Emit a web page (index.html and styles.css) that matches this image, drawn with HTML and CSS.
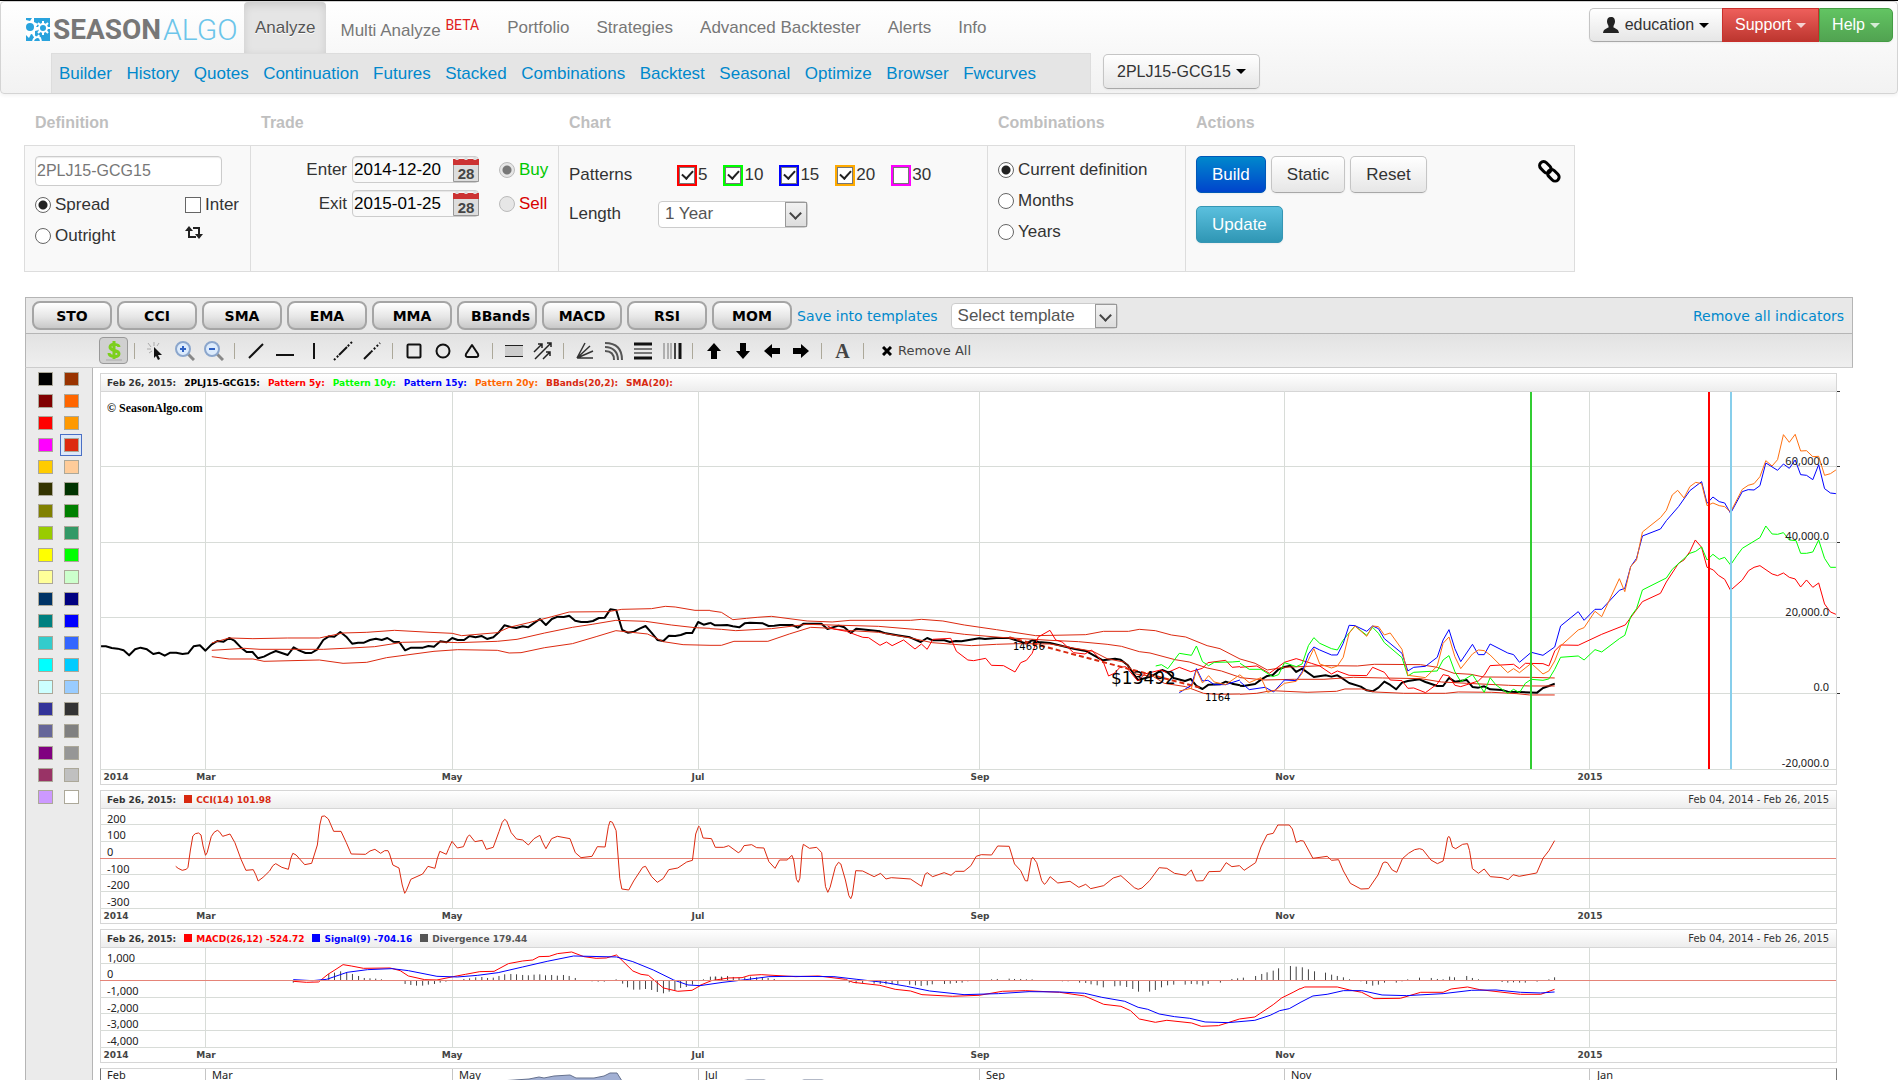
FILE: index.html
```html
<!DOCTYPE html>
<html lang="en">
<head>
<meta charset="utf-8">
<title>SeasonAlgo - Analyze</title>
<link rel="stylesheet" href="styles.css">
</head>
<body>
<header class="navbar">
  <div class="nav-main">
    <a class="brand" href="#">
      <svg class="brand-mark" width="24" height="23" viewBox="0 0 24 23"><path fill="#29a3dd" d="M0 0h24v23H0z"/><path fill="#fff" d="M0 2l4 1 2-3h2l0 4 4 2-2 3 3 3-4 1 0 4-4-1-2 4-3-3z"/><circle cx="4" cy="9" r="4" fill="#29a3dd"/><g fill="none" stroke="#fff"><circle cx="17" cy="10" r="4" stroke-width="2"/><path stroke-width="2" d="M17 3v3M17 14v3M10 10h3M21 10h3M12 5l2 2M20 13l2 2M22 5l-2 2M14 13l-2 2"/><path stroke-width="2" d="M7 23c1-4 5-5 7-3l1 3M7 16l2 3M13 17l-1 2"/></g></svg>
      <span class="brand-a">SEASON</span><span class="brand-b">ALGO</span>
    </a>
    <nav class="menu">
      <a class="active" href="#">Analyze</a>
      <a href="#">Multi Analyze <sup>BETA</sup></a>
      <a href="#">Portfolio</a>
      <a href="#">Strategies</a>
      <a href="#">Advanced Backtester</a>
      <a href="#">Alerts</a>
      <a href="#">Info</a>
    </nav>
    <div class="user-buttons">
      <button class="btn first" type="button"><svg width="16" height="16" viewBox="0 0 16 16"><path fill="#222" d="M8 0c3 0 4 2 4 4.500 0 2-1 3-1.500 4.500v1.500c2 1 5 1.500 5.500 5.500H0c.500-4 3.500-4.500 5.500-5.500V9C5 7.500 4 6.500 4 4.500 4 2 5 0 8 0z"/></svg>education<i class="caret"></i></button>
      <button class="btn danger" type="button">Support<i class="caret"></i></button>
      <button class="btn success" type="button">Help<i class="caret"></i></button>
    </div>
  </div>
  <div class="nav-sub">
    <nav class="submenu">
      <a href="#">Builder</a><a href="#">History</a><a href="#">Quotes</a><a href="#">Continuation</a><a href="#">Futures</a><a href="#">Stacked</a><a href="#">Combinations</a><a href="#">Backtest</a><a href="#">Seasonal</a><a href="#">Optimize</a><a href="#">Browser</a><a href="#">Fwcurves</a>
    </nav>
    <button class="btn symbol" type="button">2PLJ15-GCG15<i class="caret"></i></button>
  </div>
</header>

<form class="builder">
  <section>
    <h2>Definition</h2>
    <div class="cell definition">
      <input class="field symbol-field" type="text" value="2PLJ15-GCG15" aria-label="Symbol">
      <label><input type="radio" name="kind" checked>Spread</label>
      <label><input type="checkbox">Inter</label>
      <label><input type="radio" name="kind">Outright</label>
      <svg class="swap" width="18" height="13" viewBox="0 0 18 13"><path fill="none" stroke="#222" stroke-width="2" d="M4 3v8h7M8 2h6v7"/><path fill="#222" d="M0 5l4-5 4 5zM10 8h8l-4 5z"/></svg>
    </div>
  </section>
  <section>
    <h2>Trade</h2>
    <div class="cell trade">
      <label for="enter">Enter</label>
      <span class="date"><input id="enter" class="field" type="text" value="2014-12-20"><svg width="26" height="25" viewBox="0 0 26 25"><path fill="#ddd" stroke="#999" d="M.5 4.500h25v20H.5z"/><path fill="#c33" d="M0 2h26v6H0z"/><path stroke="#ddd" stroke-width="3" stroke-dasharray="3 4" d="M4 0v5M13 0v5M22 0v5"/><text x="13" y="22" text-anchor="middle">28</text></svg></span>
      <label class="buy"><input type="radio" name="side" checked disabled>Buy</label>
      <label for="exit">Exit</label>
      <span class="date"><input id="exit" class="field" type="text" value="2015-01-25"><svg width="26" height="25" viewBox="0 0 26 25"><path fill="#ddd" stroke="#999" d="M.5 4.500h25v20H.5z"/><path fill="#c33" d="M0 2h26v6H0z"/><path stroke="#ddd" stroke-width="3" stroke-dasharray="3 4" d="M4 0v5M13 0v5M22 0v5"/><text x="13" y="22" text-anchor="middle">28</text></svg></span>
      <label class="sell"><input type="radio" name="side" disabled>Sell</label>
    </div>
  </section>
  <section>
    <h2>Chart</h2>
    <div class="cell chart-options">
      <span>Patterns</span>
      <div class="patterns">
        <label class="p5"><input type="checkbox" checked>5</label>
        <label class="p10"><input type="checkbox" checked>10</label>
        <label class="p15"><input type="checkbox" checked>15</label>
        <label class="p20"><input type="checkbox" checked>20</label>
        <label class="p30"><input type="checkbox">30</label>
      </div>
      <label for="length">Length</label>
      <span class="select length"><select id="length"><option>1 Year</option></select></span>
    </div>
  </section>
  <section>
    <h2>Combinations</h2>
    <div class="cell combos">
      <label><input type="radio" name="combo" checked>Current definition</label>
      <label><input type="radio" name="combo">Months</label>
      <label><input type="radio" name="combo">Years</label>
    </div>
  </section>
  <section>
    <h2>Actions</h2>
    <div class="cell actions">
      <div class="action-buttons">
        <button class="btn primary" type="button">Build</button>
        <button class="btn" type="button">Static</button>
        <button class="btn" type="button">Reset</button>
        <button class="btn info" type="button">Update</button>
      </div>
      <a href="#" aria-label="Link"><svg width="24" height="24" viewBox="0 0 24 24" fill="none" stroke="#000" stroke-width="3"><rect x="2" y="4" width="13" height="8" rx="4" transform="rotate(45 8 8)"/><rect x="10" y="12" width="13" height="8" rx="4" transform="rotate(45 16 16)"/></svg></a>
    </div>
  </section>
</form>

<main class="workspace">
  <div class="indicators">
    <button type="button">STO</button><button type="button">CCI</button><button type="button">SMA</button><button type="button">EMA</button><button type="button">MMA</button><button type="button">BBands</button><button type="button">MACD</button><button type="button">RSI</button><button type="button">MOM</button>
    <a href="#">Save into templates</a>
    <span class="select template"><select aria-label="Select template"><option>Select template</option></select></span>
    <a class="remove" href="#">Remove all indicators</a>
  </div>
  <div class="tools">
    <button class="on" type="button" aria-label="Show profit"><svg viewBox="0 0 20 20"><path fill="none" stroke="#7ccf1d" stroke-width="3" d="M15 6c0-3-9-4-9 0 0 5 9 2 9 7 0 4-10 3-10-1M10 0v18"/><path stroke="#aaa" d="M2 19h16"/></svg></button>
    <i class="sep"></i>
    <button type="button" aria-label="Cursor"><svg viewBox="0 0 20 20"><path stroke="#aaa" fill="none" d="M8 1v4M2 2l3 4M1 8h4M13 2l-2 3M3 12l3-2"/><path fill="#111" d="M8 6l8 8h-4l2 4-2 1-2-4-2 2z"/></svg></button>
    <button type="button" aria-label="Zoom in"><svg viewBox="0 0 20 20"><path stroke="#888" stroke-width="3" d="M13 13l6 6"/><circle cx="8" cy="8" r="7" fill="#dcebfc" stroke="#8ba6cc" stroke-width="2"/><path stroke="#2f62c4" stroke-width="2" d="M8 5v6M5 8h6"/></svg></button>
    <button type="button" aria-label="Zoom out"><svg viewBox="0 0 20 20"><path stroke="#888" stroke-width="3" d="M13 13l6 6"/><circle cx="8" cy="8" r="7" fill="#dcebfc" stroke="#8ba6cc" stroke-width="2"/><path stroke="#2f62c4" stroke-width="2" d="M5 8h6"/></svg></button>
    <i class="sep"></i>
    <button type="button" aria-label="Line"><svg viewBox="0 0 20 20"><path stroke="#111" stroke-width="2" d="M3 17L17 3"/></svg></button>
    <button type="button" aria-label="Horizontal line"><svg viewBox="0 0 20 20"><path stroke="#111" stroke-width="2" d="M1 14h18"/></svg></button>
    <button type="button" aria-label="Vertical line"><svg viewBox="0 0 20 20"><path stroke="#111" stroke-width="2" d="M10 2v16"/></svg></button>
    <button type="button" aria-label="Infinite line"><svg viewBox="0 0 20 20"><path stroke="#111" stroke-width="2" d="M6 14l8-8"/><path stroke="#111" stroke-width="2" stroke-dasharray="2 2" d="M1 19l5-5M19 1l-5 5"/></svg></button>
    <button type="button" aria-label="Ray"><svg viewBox="0 0 20 20"><path stroke="#111" stroke-width="2" d="M2 18l7-7"/><path stroke="#111" stroke-width="2" stroke-dasharray="2 2" d="M9 11l9-9"/></svg></button>
    <i class="sep"></i>
    <button type="button" aria-label="Rectangle"><svg viewBox="0 0 20 20"><rect x="3.500" y="3.500" width="13" height="13" rx="1" fill="none" stroke="#111" stroke-width="2"/></svg></button>
    <button type="button" aria-label="Ellipse"><svg viewBox="0 0 20 20"><circle cx="10" cy="10" r="6.500" fill="none" stroke="#111" stroke-width="2"/></svg></button>
    <button type="button" aria-label="Triangle"><svg viewBox="0 0 20 20"><path fill="none" stroke="#111" stroke-width="2" stroke-linejoin="round" d="M10 4l6 9q1 3-2 3H6q-3 0-2-3z"/></svg></button>
    <i class="sep"></i>
    <button type="button" aria-label="Channel"><svg viewBox="0 0 20 20"><path fill="#ccc" d="M1 5h18v10H1z"/><path stroke="#222" d="M1 4.500h18M1 15.500h18"/></svg></button>
    <button type="button" aria-label="Pitchfork"><svg viewBox="0 0 20 20"><path fill="none" stroke="#222" stroke-width="1.500" d="M1 11L9 3M5 3h4v4M2 18L18 2M14 2h4v4M10 18l7-7M13 11h4v4"/></svg></button>
    <i class="sep"></i>
    <button type="button" aria-label="Fibonacci fan"><svg viewBox="0 0 20 20"><path stroke="#333" stroke-width="1.500" d="M2 17L10 2M2 17L15 5M2 17l16-7M2 17h16"/></svg></button>
    <button type="button" aria-label="Fibonacci arcs"><svg viewBox="0 0 20 20"><path fill="none" stroke="#555" stroke-width="2" d="M1 2c11 0 17 6 17 17M1 6c8 0 13 5 13 13M1 10c6 0 9 3 9 9"/></svg></button>
    <button type="button" aria-label="Fibonacci retracement"><svg viewBox="0 0 20 20"><path stroke="#111" stroke-width="3" d="M1 3h18M1 17h18"/><path stroke="#777" stroke-width="2" d="M1 8h18M1 12h18"/></svg></button>
    <button type="button" aria-label="Fibonacci time zones"><svg viewBox="0 0 20 20"><path stroke="#777" d="M2 2v16M6 2v16M9 2v16"/><path stroke="#444" stroke-width="2" d="M13 2v16"/><path stroke="#111" stroke-width="3" d="M18 2v16"/></svg></button>
    <i class="sep"></i>
    <button type="button" aria-label="Up arrow"><svg viewBox="0 0 20 20"><path d="M10 2l7 8h-4v8H7v-8H3z"/></svg></button>
    <button type="button" aria-label="Down arrow"><svg viewBox="0 0 20 20"><path d="M10 18l7-8h-4V2H7v8H3z"/></svg></button>
    <button type="button" aria-label="Left arrow"><svg viewBox="0 0 20 20"><path d="M2 10l8-7v4h8v6h-8v4z"/></svg></button>
    <button type="button" aria-label="Right arrow"><svg viewBox="0 0 20 20"><path d="M18 10l-8-7v4H2v6h8v4z"/></svg></button>
    <i class="sep"></i>
    <button class="letter" type="button">A</button>
    <i class="sep"></i>
    <button class="clear" type="button"><svg viewBox="0 0 10 10"><path stroke="#000" stroke-width="3" d="M1 1l8 8M9 1l-8 8"/></svg>Remove All</button>
  </div>
  <div class="stage">
    <div class="palette" id="palette"></div>
    <div class="panels">
      <section class="panel">
        <h3><b>Feb 26, 2015:</b><b class="k">2PLJ15-GCG15:</b><b class="c5">Pattern 5y:</b><b class="c10">Pattern 10y:</b><b class="c15">Pattern 15y:</b><b class="c20">Pattern 20y:</b><b class="ind">BBands(20,2):</b><b class="ind last">SMA(20):</b></h3>
        <svg class="plot" viewBox="1 1 1735 392">
          <path class="grid" d="M0 75.500h1736M0 151.500h1736M0 226.500h1736M0 302.500h1736M0 378.500h1736M105.500 0v378M352.500 0v378M598.500 0v378M879.500 0v378M1184.500 0v378M1489.500 0v378"/>
          <path class="tick" d="M1737 .5h3M1737 75.500h3M1737 151.500h3M1737 226.500h3M1737 302.500h3"/>
          <text class="mark" x="7" y="21">© SeasonAlgo.com</text>
          <g transform="matrix(.3954 0 0 .3333 -10 189)">
            <polyline class="price" points="28,199 40,199 55,204 70,206 85,211 99,226 114,208 128,203 144,208 160,222 174,218 189,227 203,218 218,218 234,222 248,220 262,199 278,196 292,212 308,193 322,183 338,185 352,174 366,183 382,203 396,216 411,216 425,235 440,230 456,220 470,213 485,219 500,225 515,202 530,212 545,219 560,219 574,209 590,180 604,169 618,170 633,156 648,170 663,191 678,188 693,188 708,180 723,176 738,180 752,174 767,185 782,186 797,211 812,203 842,203 856,198 870,200 886,184 902,187 916,174 930,180 946,180 960,168 975,172 990,168 1004,177 1020,172 1034,157 1048,136 1064,141 1078,144 1094,139 1108,142 1122,130 1138,117 1153,135 1168,117 1183,110 1198,111 1212,107 1227,122 1242,126 1258,126 1272,123 1287,114 1302,113 1316,88 1331,91 1346,150 1360,158 1376,155 1390,146 1405,138 1420,158 1435,180 1450,183 1464,167 1480,168 1494,165 1508,159 1523,159 1538,126 1552,134 1568,129"/>
            <polyline class="band" points="308,189 352,174 412,176 500,174 580,174 640,159 700,157 770,151 860,157 916,160 940,167 1030,158 1060,142 1110,128 1168,110 1212,96 1310,95 1345,88 1420,86 1455,79 1480,81 1530,91 1568,91"/>
            <polyline class="band" points="308,211 390,205 430,208 590,208 660,204 720,200 790,187 870,185 930,188 1030,184 1080,178 1150,159 1220,142 1270,133 1330,121 1405,124 1470,135 1530,143 1568,145"/>
            <polyline class="band" points="308,230 352,237 412,237 440,244 580,240 640,250 700,247 750,233 870,214 930,209 1030,211 1060,219 1090,218 1150,203 1220,191 1280,170 1330,152 1410,162 1450,185 1500,194 1568,196"/>
          </g>
          <g transform="matrix(.35714 0 0 .3333 600 189)">
            <polyline class="price" points="28,128 42,136 58,136 76,135 92,139 110,142 125,130 140,128 176,130 192,138 208,137 224,135 258,135 274,143 290,131 340,131 357,147 388,137 404,142 422,159 438,146 504,154 520,160 552,166 588,172 618,186 636,174 652,181 684,181 700,186 716,183 732,184 782,175 798,177 830,174 866,174 912,190 930,181 948,186 980,189 1046,206 1080,213 1128,241 1162,236 1178,239 1198,256 1226,300 1245,295 1262,290 1294,270 1308,276 1326,294 1358,303 1374,297 1390,318 1407,327 1424,314 1456,313 1472,305 1490,311 1512,316"/>
            <polyline class="band" points="28,92 60,97 92,119 130,115 160,112 200,109 300,123 370,126 420,121 590,121 620,118 680,123 740,135 830,149 940,167 1080,164 1130,154 1200,154 1230,148 1275,152 1320,165 1360,171 1420,197 1456,206 1512,237"/>
            <polyline class="band" points="28,146 60,148 100,152 200,146 300,133 400,136 500,139 600,148 690,156 740,163 840,172 980,181 1060,185 1140,193 1180,199 1230,215 1260,219 1330,239 1370,246 1420,264 1460,273 1512,292"/>
            <polyline class="band" points="28,196 60,196 95,184 190,184 250,162 310,142 350,144 410,151 500,157 590,174 650,188 760,197 830,193 890,191 980,192 1040,203 1100,214 1140,236 1190,247 1220,282 1270,290 1300,310 1360,320 1410,340 1450,343 1512,342"/>
            <polyline class="s5" points="357,138 375,147 410,154 440,166 456,172 472,173 504,196 522,186 538,197 570,180 602,207 620,192 636,208 652,178 702,175 718,214 750,240 766,242 800,235 816,256 850,257 882,276 898,248 914,241 930,220 947,171 980,151 996,180 1014,186 1046,218 1078,222 1096,210 1130,248 1144,288 1160,280 1176,262 1192,260 1226,303 1245,282 1290,270 1308,278 1342,262 1374,275 1407,265 1422,248 1472,241 1490,262 1512,260"/>
            <polyline class="s10" points="1276,258 1292,254 1310,266 1342,220 1376,226 1390,198 1407,245 1424,257 1440,247 1490,246 1512,244"/>
            <polyline class="s15" points="1342,338 1376,316 1390,266 1407,303 1422,301 1440,314 1472,314 1512,300"/>
            <polyline class="s20" points="1342,333 1376,325 1390,270 1407,309 1424,287 1440,306 1472,314 1512,284"/>
            <path class="trend" d="M866 172L1407 325"/>
          </g>
          <g transform="matrix(.41964 0 0 .3333 1140 -11)">
            <polyline class="price" points="0,917 8,918 36,912 50,899 65,888 78,885 92,868 106,861 120,857 134,876 148,866 176,891 204,886 218,890 232,886 246,897 260,909 288,920 302,931 316,934 330,923 344,905 358,915 372,928 386,908 400,903 428,898 442,906 470,918 484,918 498,894 512,905 540,900 554,921 568,923 582,919 596,928 624,930 638,935 666,936 708,938 722,924 736,918 750,911"/>
            <polyline class="band" points="0,837 36,850 65,870 106,862 200,857 280,858 320,853 430,854 470,862 510,880 550,883 580,891 690,892 750,894"/>
            <polyline class="band" points="0,893 60,900 130,898 200,898 270,892 340,894 430,896 480,906 540,910 640,916 690,918 750,918"/>
            <polyline class="band" points="0,943 40,940 75,932 160,937 230,934 250,927 290,927 320,936 390,940 490,940 520,936 600,937 660,941 690,945 750,945"/>
            <polyline class="s5" points="0,862 40,858 70,880 106,847 134,836 170,850 190,858 218,882 232,873 260,886 302,887 316,862 344,877 358,900 386,902 400,925 414,924 442,938 470,912 484,884 498,888 512,916 526,920 568,903 582,886 596,857 652,853 666,866 680,850 722,851 736,858 750,813 764,795 806,796 862,763 918,735 959,665 1002,640 1016,606 1045,550 1058,540 1072,515 1085,480 1100,502 1113,562 1128,570 1140,586 1155,598 1169,631 1197,600 1212,572 1225,562 1239,557 1268,582 1281,587 1295,579 1309,592 1323,597 1336,621 1350,600 1365,622 1379,609 1393,672 1407,696 1420,703"/>
            <polyline class="s10" points="0,850 22,868 50,868 78,890 92,884 106,848 134,860 148,852 163,797 176,773 190,790 218,806 232,810 246,780 274,738 302,766 316,742 330,760 344,788 386,833 400,888 414,877 470,873 484,840 498,827 512,875 526,905 554,884 582,937 596,893 610,915 638,940 652,928 666,938 680,910 694,898 722,901 736,897 750,868 764,832 806,828 820,840 846,809 862,816 904,776 917,766 931,710 945,686 959,630 1016,594 1030,568 1058,536 1072,520 1086,514 1100,501 1113,540 1127,523 1142,538 1155,532 1169,555 1184,527 1197,505 1239,473 1253,438 1268,462 1281,463 1295,458 1309,480 1325,482 1336,520 1350,520 1365,516 1379,480 1393,535 1407,562 1420,562"/>
            <polyline class="s15" points="0,905 22,929 60,922 80,936 106,900 134,902 148,876 163,822 176,801 190,810 218,825 232,825 246,790 260,736 274,737 302,754 316,738 330,746 344,776 386,820 400,873 414,862 442,859 470,832 484,780 498,749 512,806 526,845 554,793 568,824 582,824 596,792 638,819 652,824 666,847 694,817 722,826 750,801 764,738 806,695 820,721 846,688 862,688 904,631 917,625 931,560 945,535 959,468 1002,447 1016,422 1045,380 1072,332 1100,305 1113,370 1127,351 1142,365 1155,369 1169,400 1197,335 1211,329 1225,330 1239,317 1253,249 1281,271 1295,252 1309,265 1323,240 1336,284 1350,286 1365,299 1379,254 1393,326 1407,339 1420,341"/>
            <polyline class="s20" points="0,885 22,908 50,893 66,937 85,930 106,910 134,904 148,880 163,840 176,806 190,852 218,864 232,858 246,832 260,760 274,738 302,769 316,738 330,740 344,765 358,759 386,808 400,886 442,893 470,858 484,790 498,771 512,830 526,866 554,822 568,810 582,812 596,825 638,878 652,866 666,878 694,850 722,882 736,873 750,843 764,798 806,750 820,743 846,694 862,710 904,596 917,635 931,560 945,540 959,456 1002,413 1016,391 1030,345 1043,331 1058,354 1072,320 1086,307 1100,311 1113,377 1127,369 1142,377 1155,380 1169,396 1197,328 1211,316 1225,311 1239,290 1253,242 1268,258 1281,239 1295,164 1309,187 1323,163 1336,213 1350,212 1365,230 1379,229 1393,286 1407,281 1420,270"/>
          </g>
          <path class="v-enter" d="M1431 1v377"/><path class="v-exit" d="M1609 1v377"/><path class="v-now" d="M1631 1v377"/>
          <text class="note" x="913" y="259">14656</text><text class="note big" x="1011" y="293">$13492</text><text class="note" x="1105" y="310">1164</text>
          <g class="axis end"><text x="1729" y="74">60,000.0</text><text x="1729" y="149">40,000.0</text><text x="1729" y="225">20,000.0</text><text x="1729" y="300">0.0</text><text x="1729" y="376">-20,000.0</text></g>
          <g class="months"><text x="16" y="389">2014</text><text x="106" y="389">Mar</text><text x="352" y="389">May</text><text x="598" y="389">Jul</text><text x="880" y="389">Sep</text><text x="1185" y="389">Nov</text><text x="1490" y="389">2015</text></g>
        </svg>
      </section>
      <section class="panel">
        <h3><b>Feb 26, 2015:</b><b class="ind"><i class="key"></i>CCI(14) 101.98</b><span>Feb 04, 2014 - Feb 26, 2015</span></h3>
        <svg class="plot" viewBox="1 1 1735 114">
          <path class="grid" d="M0 16.500h1736M0 33.500h1736M0 66.500h1736M0 83.500h1736M0 100.500h1736M105.500 0v100M352.500 0v100M598.500 0v100M879.500 0v100M1184.500 0v100M1489.500 0v100"/>
          <path class="zero" d="M0 50.500h1736"/>
          <g class="band" transform="matrix(.40816 0 0 .3333 -10 -28)"><polyline points="210,259 216,265 226,271 236,268 240,262 246,210 252,168 258,161 266,159 272,165 277,198 283,226 287,218 297,170 304,157 312,151 317,155 325,169 333,166 343,162 355,188 370,238 382,271 400,269 406,284 412,303 424,292 440,273 448,257 455,251 470,262 486,268 492,235 497,220 505,225 526,254 543,250 557,195 563,135 568,109 575,108 584,117 597,154 615,154 628,188 640,222 675,223 686,213 698,208 712,220 722,212 730,212 734,222 742,255 757,264 765,315 771,340 775,332 786,298 815,282 828,259 845,265 851,235 857,214 873,223 879,205 887,184 900,204 915,200 925,170 930,165 943,185 961,181 971,208 988,202 1002,155 1010,127 1016,118 1021,123 1032,158 1045,177 1060,180 1074,195 1088,176 1102,166 1109,187 1117,206 1131,176 1145,169 1176,176 1189,218 1203,233 1230,229 1243,200 1262,201 1270,140 1274,124 1280,127 1289,152 1298,295 1303,327 1320,330 1332,303 1354,262 1361,259 1376,290 1390,307 1404,296 1418,269 1440,264 1462,246 1476,241 1484,162 1491,139 1494,141"/></g>
          <g class="band" transform="matrix(.38265 0 0 .3333 600 -28)"><polyline points="0,143 8,174 30,176 40,202 62,202 75,197 100,218 106,214 115,197 135,194 148,203 167,204 180,245 196,265 208,240 228,240 240,226 245,240 252,298 257,307 261,295 267,210 270,193 286,205 305,202 318,218 328,320 334,337 340,322 354,260 362,247 368,252 380,300 389,347 394,356 398,345 407,272 425,273 455,290 472,280 486,297 500,293 550,297 579,319 588,283 594,278 608,290 638,278 656,286 668,274 690,274 708,257 722,229 735,224 762,225 778,198 808,199 822,252 838,272 850,302 856,303 866,236 870,232 880,248 893,302 900,313 905,308 915,290 935,309 967,304 990,322 1008,313 1021,326 1055,317 1080,294 1100,287 1135,323 1145,328 1155,324 1175,302 1200,263 1220,265 1240,280 1270,286 1284,270 1297,303 1315,302 1330,275 1360,274 1375,248 1390,260 1410,257 1422,271 1452,248 1466,201 1482,164 1498,160 1510,135 1540,135 1548,147 1558,187 1568,183"/></g>
          <g class="band" transform="matrix(.40689 0 0 .3333 1160 -28)"><polyline points="98,182 107,183 130,235 165,229 176,241 193,239 205,273 222,310 248,327 267,326 290,285 302,249 307,246 313,248 325,270 336,277 350,236 365,220 380,209 392,206 400,209 420,240 436,251 450,243 455,215 461,174 464,169 467,174 473,201 481,206 498,193 510,191 515,212 522,266 537,280 551,267 566,290 595,293 610,299 622,284 637,289 680,279 696,234 710,212 724,182"/></g>
          <g class="axis"><text x="7" y="15">200</text><text x="7" y="31">100</text><text x="7" y="48">0</text><text x="7" y="65">-100</text><text x="7" y="81">-200</text><text x="7" y="98">-300</text></g>
          <g class="months"><text x="16" y="111">2014</text><text x="106" y="111">Mar</text><text x="352" y="111">May</text><text x="598" y="111">Jul</text><text x="880" y="111">Sep</text><text x="1185" y="111">Nov</text><text x="1490" y="111">2015</text></g>
        </svg>
      </section>
      <section class="panel">
        <h3><b>Feb 26, 2015:</b><b class="c5"><i class="key"></i>MACD(26,12) -524.72</b><b class="c15"><i class="key"></i>Signal(9) -704.16</b><b class="div"><i class="key"></i>Divergence 179.44</b><span>Feb 04, 2014 - Feb 26, 2015</span></h3>
        <svg class="plot" viewBox="1 1 1735 114">
          <path class="grid" d="M0 16.500h1736M0 50.500h1736M0 66.500h1736M0 83.500h1736M0 100.500h1736M105.500 0v100M352.500 0v100M598.500 0v100M879.500 0v100M1184.500 0v100M1489.500 0v100"/>
          <g transform="matrix(.40816 0 0 .3333 -10 -167)">
            <path class="bars" d="M498 601V608M585 601V582M599 601V578M614 601V574M629 601V577M643 601V582M658 601V588M672 601V594M686 601V595M700 601V596M714 601V598M757 601V603M772 601V612M786 601V615M800 601V617M815 601V617M829 601V614M844 601V612M858 601V608M872 601V605M916 601V597M930 601V595M945 601V592M960 601V591M974 601V594M988 601V593M1002 601V588M1016 601V583M1031 601V582M1045 601V583M1060 601V585M1074 601V586M1088 601V584M1102 601V583M1116 601V586M1131 601V585M1145 601V587M1160 601V585M1174 601V588M1189 601V594M1230 601V604M1245 601V605M1260 601V605M1289 601V598M1305 601V611M1317 601V622M1332 601V629M1347 601V629M1361 601V627M1376 601V630M1390 601V636M1405 601V640M1419 601V635M1433 601V631M1447 601V624M1461 601V621M1476 601V614M1503 601V598M1520 601V590M1533 601V590M1548 601V592M1562 601V588"/>
            <polyline class="s5" points="498,604 530,607 560,606 583,583 600,570 620,554 640,558 670,565 735,564 760,572 780,588 820,599 850,600 890,590 920,583 955,575 990,574 1025,551 1060,543 1085,540 1100,530 1125,529 1145,521 1180,516 1210,530 1240,535 1265,534 1290,525 1330,573 1350,583 1368,586 1405,624 1440,634 1475,631 1495,617"/>
            <polyline class="s15" points="498,599 545,602 580,598 630,577 680,569 740,566 780,572 850,589 900,591 950,586 1000,578 1060,561 1120,544 1185,528 1290,531 1330,545 1380,570 1430,600 1465,615 1495,617"/>
          </g>
          <g transform="matrix(.38265 0 0 .3333 600 -167)">
            <path class="bars" d="M40 601V590M56 601V590M72 601V591M87 601V591M102 601V593M117 601V592M132 601V590M148 601V592M163 601V592M178 601V594M194 601V597M390 601V608M408 601V610M425 601V609M455 601V611M471 601V612M486 601V613M502 601V613M517 601V612M548 601V614M563 601V616M578 601V618M594 601V616M607 601V613M639 601V612M654 601V611M670 601V609M685 601V608M700 601V604M762 601V598M777 601V597M808 601V596M822 601V597M838 601V597M853 601V598M868 601V598M947 601V604M962 601V604M992 601V608M1008 601V609M1022 601V613M1038 601V616M1054 601V622M1084 601V619M1098 601V617M1115 601V621M1131 601V627M1146 601V635M1175 601V635M1190 601V630M1206 601V622M1222 601V616M1238 601V614M1268 601V614M1284 601V612M1299 601V613M1314 601V617M1328 601V612M1360 601V608M1390 601V597M1405 601V595M1420 601V593M1452 601V588M1468 601V582M1482 601V577M1498 601V572M1512 601V565M1543 601V558M1558 601V560"/>
            <polyline class="s5" points="0,616 30,602 75,594 110,593 130,586 160,584 250,590 310,588 380,598 400,607 470,616 510,628 550,633 580,644 660,649 730,646 790,634 850,632 940,637 1005,648 1055,673 1100,679 1125,692 1148,717 1190,727 1220,721 1285,729 1310,739 1355,737 1410,717 1450,711 1498,674 1520,654 1550,637 1568,626"/>
            <polyline class="s15" points="0,617 60,607 120,599 180,590 240,589 350,590 410,598 480,607 540,619 600,633 690,644 780,641 860,635 940,636 1005,640 1050,652 1110,664 1145,682 1170,688 1200,702 1240,710 1280,715 1320,726 1380,728 1450,721 1490,706 1515,692 1540,686 1568,668"/>
          </g>
          <g transform="matrix(.40689 0 0 .3333 1160 -167)">
            <path class="bars" d="M104 601V562M119 601V568M134 601V574M161 601V578M176 601V584M190 601V588M205 601V592M220 601V598M248 601V604M262 601V612M277 601V617M291 601V614M306 601V608M335 601V608M349 601V604M363 601V598M392 601V593M421 601V594M436 601V597M450 601V598M466 601V590M478 601V592M508 601V588M522 601V594M537 601V598M595 601V606M609 601V608M623 601V607M638 601V608M652 601V608M681 601V605M710 601V598M724 601V592"/>
            <polyline class="s5" points="98,627 110,621 190,621 220,630 250,637 280,656 345,655 395,637 450,637 470,627 510,621 540,629 590,636 640,643 690,643 724,628"/>
            <polyline class="s15" points="98,668 130,648 165,643 205,632 250,632 300,645 360,647 450,641 520,631 580,630 640,637 690,639 724,636"/>
          </g>
          <path class="zero" d="M0 33.500h1736"/>
          <g class="axis"><text x="7" y="15">1,000</text><text x="7" y="31">0</text><text x="7" y="48">-1,000</text><text x="7" y="65">-2,000</text><text x="7" y="81">-3,000</text><text x="7" y="98">-4,000</text></g>
          <g class="months"><text x="16" y="111">2014</text><text x="106" y="111">Mar</text><text x="352" y="111">May</text><text x="598" y="111">Jul</text><text x="880" y="111">Sep</text><text x="1185" y="111">Nov</text><text x="1490" y="111">2015</text></g>
        </svg>
      </section>
      <section class="panel navigator">
        <svg class="plot" viewBox="1 0 1735 11">
          <path class="grid nav-grid" d="M105.500 0v11M352.500 0v11M598.500 0v11M879.500 0v11M1184.500 0v11M1489.500 0v11"/>
          <path class="area" d="M400 12l29-2 10-2 5 1 10-2 16-1 6 3h18l10-2 6-3h7l5 8zM640 12l8-1h16l4 1zM700 12l4-1h18l4 1z"/>
          <g class="axis"><text x="7" y="10">Feb</text><text x="112" y="10">Mar</text><text x="359" y="10">May</text><text x="605" y="10">Jul</text><text x="886" y="10">Sep</text><text x="1191" y="10">Nov</text><text x="1497" y="10">Jan</text></g>
        </svg>
      </section>
    </div>
  </div>
</main>
<script src="palette.js"></script>
</body>
</html>
```
FILE: styles.css
```css
* { box-sizing: border-box; }
body { margin: 0; border-top: 1px solid #000; background: #fff; color: #333; font: 17px/20px "Liberation Sans", Arial, sans-serif; }
a { color: #08c; text-decoration: none; }
button, input, select { font: inherit; color: inherit; margin: 0; }
button { cursor: pointer; }
svg { flex: none; }

.navbar { height: 93px; border: 1px solid #d4d4d4; border-radius: 4px; background: linear-gradient(#fff, #f2f2f2); box-shadow: 0 1px 4px rgba(0, 0, 0, .07); }
.nav-main { display: flex; height: 51px; }
.brand { display: flex; align-items: center; width: 218px; margin-left: 25px; padding-top: 4px; font: 28px/30px Roboto, "Liberation Sans", sans-serif; white-space: nowrap; }
.brand-mark { margin-right: 3px; }
.brand-a { color: #777; font-weight: 700; }
.brand-b { color: #6cc5ea; font-size: 30px; font-weight: 300; margin-left: 2px; }
.menu { display: flex; }
.menu a { margin-right: 1px; padding: 16px 13px 0; color: #777; text-shadow: 0 1px 0 #fff; white-space: nowrap; }
.menu a.active { padding: 16px 11px 0; margin-right: 1px; color: #555; background: #e5e5e5; box-shadow: inset 0 3px 8px rgba(0, 0, 0, .12); border-radius: 4px 4px 0 0; }
.menu sup { color: #e02020; font: 14px/14px Roboto, sans-serif; vertical-align: 6px; margin: 0 1px 0 0; }
.user-buttons { display: flex; align-items: flex-start; margin: 6px 4px 0 auto; }
.nav-sub { display: flex; height: 40px; }
.submenu { display: flex; justify-content: space-between; width: 1040px; margin-left: 50px; padding: 10px 54px 0 7px; background: #e5e5e5; border: solid #ddd; border-width: 1px 1px 0; }

.btn { display: inline-flex; align-items: center; justify-content: center; height: 37px; padding: 0 15px; border: 1px solid #c5c5c5; border-bottom-color: #a8a8a8; border-radius: 5px; background: linear-gradient(#fff, #e6e6e6); color: #333; box-shadow: 0 1px 2px rgba(0, 0, 0, .05); white-space: nowrap; }
.caret { border: 5px solid transparent; border-top-color: #000; border-bottom: 0; margin-left: 5px; }
.symbol { height: 35px; margin: 1px 0 0 12px; padding: 0 13px; font-size: 16px; }
.user-buttons .btn { height: 34px; border-radius: 0; padding: 0 12px; font-size: 16px; }
.user-buttons .first { border-radius: 5px 0 0 5px; border-right: 0; padding: 0 13px; }
.first svg { margin-right: 6px; }
.user-buttons .danger { background: linear-gradient(#ee5f5b, #bd362f); border-color: #c9302c; color: #fff; }
.user-buttons .success { background: linear-gradient(#62c462, #51a351); border-color: #449d44; color: #fff; border-radius: 0 5px 5px 0; }
.danger .caret, .success .caret { border-top-color: rgba(255, 255, 255, .75); }
.primary { background: linear-gradient(#08c, #04c); border-color: #0058b8; color: #fff; }
.info { background: linear-gradient(#5bc0de, #2f96b4); border-color: #3596b4; color: #fff; }

.builder { display: grid; grid-template-columns: 226px 308px 429px 198px 390px; margin: 0 0 25px 24px; }
.builder h2 { margin: 0; padding: 19px 11px 0; height: 51px; font-size: 16px; line-height: 20px; color: #bfbfbf; }
.cell { height: 127px; padding: 10px; border: solid #ddd; border-width: 1px 0 1px 1px; background: #f9f9f9; }
.actions { border-right-width: 1px; }
.cell label { display: flex; align-items: center; }
.field { height: 27px; padding: 0 2px; border: 1px solid #ccc; border-radius: 4px; background: #fff; box-shadow: inset 0 1px 1px rgba(0, 0, 0, .08); }
input[type=radio], input[type=checkbox] { appearance: none; width: 16px; height: 16px; margin: 0 4px 0 0; border: 1px solid #666; background: #fff; }
input[type=radio] { border-radius: 50%; }
input[type=radio]:checked { background: radial-gradient(#222 4px, #fff 5px); }
input[type=radio]:disabled { border-color: #bbb; background: #e6e6e6; }
input[type=radio]:checked:disabled { background: radial-gradient(#777 4px, #e6e6e6 5px); }
.definition { display: grid; grid-template-columns: 150px auto; grid-template-rows: 33px 31px 31px; align-items: center; }
.symbol-field { grid-column: 1 / 3; align-self: start; width: 187px; height: 30px; font-size: 16px; color: #777; padding: 0 1px; }
.swap { align-self: start; margin-top: 6px; }
.trade { display: grid; grid-template-columns: 86px 127px auto; gap: 7px 5px; align-content: start; }
.trade > label[for] { justify-content: flex-end; }
.date { position: relative; }
.date .field { width: 127px; padding: 0 26px 0 1px; color: #000; background: #f9f9f9; }
.date svg { position: absolute; right: 0; top: 1px; }
.date text { font: bold 15px "Liberation Sans", sans-serif; fill: #444; }
.trade .buy, .trade .sell { margin-left: 15px; }
.buy { color: #00c800; }
.sell { color: #d80000; }
.chart-options { display: grid; grid-template-columns: 89px auto; grid-template-rows: 30px 30px; row-gap: 9px; padding-top: 14px; align-items: center; }
.patterns { display: flex; gap: 16px; padding-left: 19px; }
.patterns input { display: grid; place-items: center; width: 20px; height: 21px; margin: 0 1px 0 0; border: 2px solid; box-shadow: inset 0 0 0 1px #777; }
.patterns input:checked::after { content: ""; width: 5px; height: 9px; margin-top: -3px; border: solid #222; border-width: 0 2px 2px 0; transform: rotate(42deg); }
.p5 input { border-color: #f00; } .p10 input { border-color: #0f0; } .p15 input { border-color: #00f; } .p20 input { border-color: #fa0; } .p30 input { border-color: #f0f; }
.select { position: relative; display: block; height: 27px; }
.select select { appearance: none; width: 100%; height: 100%; padding: 0 6px; border: 1px solid #ccc; border-radius: 4px; background: #fff; color: #555; }
.select::after { content: ""; position: absolute; right: 1px; top: 1px; bottom: 1px; width: 20px; border: 1px solid #999; background: linear-gradient(#f2f2f2, #ddd); pointer-events: none; }
.select::before { content: ""; position: absolute; z-index: 1; right: 8px; top: 8px; width: 7px; height: 7px; border: solid #444; border-width: 0 2px 2px 0; transform: rotate(45deg); pointer-events: none; }
.length { width: 150px; }
.combos { padding-top: 8px; }
.combos label { height: 31px; }
.actions { display: flex; justify-content: space-between; align-items: flex-start; }
.actions a { margin: 3px 3px 0 0; }
.action-buttons { display: flex; flex-wrap: wrap; gap: 13px 5px; width: 250px; }

.workspace { margin: 0 45px 0 25px; font-family: "DejaVu Sans", Verdana, sans-serif; }
.indicators { display: flex; align-items: center; height: 36px; padding: 0 8px 0 6px; border: 1px solid #b5b5b5; border-bottom: 0; background: #e8e8e8; font-size: 14px; }
.indicators button { width: 80px; height: 29px; margin-right: 5px; padding: 0 12px; border: 2px solid #a5a5a5; border-radius: 8px; background: linear-gradient(#fff, #e6e6e6 55%, #c8c8c8); color: #000; font-weight: 700; white-space: nowrap; }
.template { width: 167px; height: 26px; margin-left: 13px; font: 17px/20px "Liberation Sans", sans-serif; }
.indicators .remove { margin-left: auto; }
.tools { display: flex; align-items: center; height: 35px; padding-left: 73px; border: solid #b5b5b5; border-width: 1px; border-bottom-color: #ccc; background: linear-gradient(#e2e2e2, #efefef); }
.tools button { display: flex; align-items: center; justify-content: center; width: 29px; height: 27px; padding: 0; border: 0; background: none; }
.tools button svg { width: 20px; height: 20px; fill-rule: evenodd; }
.tools .on { border: 1px solid #999; border-radius: 4px; background: #d0d0d0; }
.sep { width: 1px; height: 16px; margin: 0 6px; background: #aca899; }
.tools .letter { font: bold 20px/24px "Liberation Serif", serif; color: #444; }
.tools .clear { width: auto; margin-left: 12px; gap: 6px; font-size: 13px; color: #444; }
.tools .clear svg { width: 10px; height: 10px; }

.stage { display: flex; }
.palette { display: grid; grid-template-columns: 22px 22px; grid-auto-rows: 22px; column-gap: 4px; align-content: start; width: 68px; flex: none; padding: 0 0 0 8px; border: solid #b5b5b5; border-width: 0 1px 0 1px; background: #ebebeb; }
.palette button { padding: 3px; border: 1px solid transparent; background: none; }
.palette button.picked { border-color: #4a6fc5; background: #dde8f8; }
.palette i { display: block; width: 15px; height: 14px; border: 1px solid #aca899; }
.panels { flex: 1; min-width: 0; padding: 5px 16px 0 7px; }
.panel { margin-bottom: 5px; border: 1px solid #d6d6d6; }
.panel h3 { display: flex; align-items: center; height: 18px; margin: 0; padding: 0 7px 0 6px; border-bottom: 1px solid #d6d6d6; background: linear-gradient(#fff, #ededed); font-size: 9px; line-height: 12px; white-space: nowrap; }
.panel h3 b { margin-right: 8px; color: #333; }
.panel h3 span { margin-left: auto; font-size: 10px; font-weight: 400; }
.panel h3 .k { color: #000; } .panel h3 .c5 { color: #f00; } .panel h3 .c10 { color: #0f0; } .panel h3 .c15 { color: #00f; } .panel h3 .c20 { color: #f60; } .panel h3 .ind { color: #d8290f; } .panel h3 .div { color: #555; }
.key { display: inline-block; width: 8px; height: 8px; margin-right: 4px; background: currentColor; }
.plot { display: block; width: 100%; height: auto; overflow: visible; }
.plot path, .plot polyline { fill: none; vector-effect: non-scaling-stroke; stroke-linejoin: round; }
.grid { stroke: #d8dcd8; }
.nav-grid { stroke: #c5c5c5; }
.tick { stroke: #333; }
.zero { stroke: #e58478; }
.band { stroke: #dc2a10; }
.price { stroke: #000; stroke-width: 2px; }
.s5 { stroke: #f00; } .s10 { stroke: #0f0; } .s15 { stroke: #00f; } .s20 { stroke: #ff7010; }
.trend { stroke: #d8290f; stroke-width: 2px; stroke-dasharray: 5 3; }
.v-enter { stroke: #32cd32; stroke-width: 2px; } .v-exit { stroke: #f00; stroke-width: 2px; } .v-now { stroke: #87ceeb; stroke-width: 2px; }
.bars { stroke: #444; }
.plot .area { fill: #a2b0d4; stroke: #66728f; }
.mark { font: bold 12px "Liberation Serif", serif; }
.note { font-size: 10px; }
.note.big { font-size: 17px; }
.axis { font: 11px "Noto Sans", sans-serif; fill: #222; }
.end { text-anchor: end; }
.months { font-size: 9px; font-weight: 700; fill: #444; text-anchor: middle; }
.navigator { margin: 0; border-bottom: 0; border-left-color: #777; border-right-color: #777; overflow: hidden; }
```
FILE: palette.js
```js
const colors = [
  "#000000", "#993300", "#800000", "#ff6600", "#ff0000", "#ff9900", "#ff00ff", "#dd2a10",
  "#ffcc00", "#ffcc99", "#333300", "#003300", "#808000", "#008000", "#99cc00", "#339966",
  "#ffff00", "#00ff00", "#ffff99", "#ccffcc", "#003366", "#000080", "#008080", "#0000ff",
  "#33cccc", "#3366ff", "#00ffff", "#00ccff", "#ccffff", "#99ccff", "#333399", "#333333",
  "#666699", "#808080", "#800080", "#969696", "#993366", "#c0c0c0", "#cc99ff", "#ffffff"
];
const palette = document.getElementById("palette");
for (const color of colors) {
  const button = document.createElement("button");
  button.type = "button";
  button.setAttribute("aria-label", color);
  if (color === "#dd2a10") button.className = "picked";
  const swatch = document.createElement("i");
  swatch.style.background = color;
  button.append(swatch);
  palette.append(button);
}
```
